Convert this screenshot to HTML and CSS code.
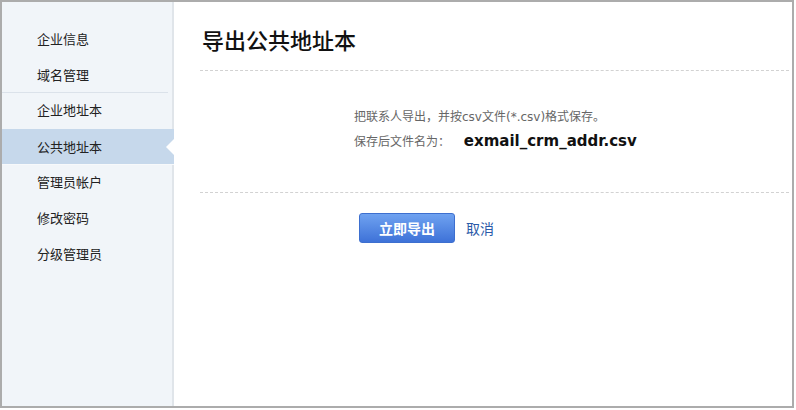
FILE: index.html
```html
<!DOCTYPE html>
<html lang="zh-CN">
<head>
  <meta charset="UTF-8">
  <title>导出公共地址本</title>
  <link rel="stylesheet" href="styles.css">
</head>
<body>
  <div class="frame">
    <ul class="menu">
      <li>企业信息</li>
      <li class="sep">域名管理</li>
      <li>企业地址本</li>
      <li class="current">公共地址本</li>
      <li>管理员帐户</li>
      <li>修改密码</li>
      <li>分级管理员</li>
    </ul>

    <div class="main">
      <h2 class="title">导出公共地址本</h2>
      <div class="info">
        <p>把联系人导出，并按csv文件(*.csv)格式保存。</p>
        <p>保存后文件名为： <b class="fname">exmail_crm_addr.csv</b></p>
      </div>
      <div class="actions">
        <button type="button" class="btn">立即导出</button>
        <a class="cancel">取消</a>
      </div>
    </div>
  </div>
</body>
</html>
```

FILE: styles.css
```css
body {
  margin: 0;
  font-family: "Liberation Sans", "Noto Sans CJK SC", sans-serif;
  background: #fff;
}

.frame {
  width: 794px;
  height: 408px;
  box-sizing: border-box;
  border: 2px solid #acacac;
  display: flex;
}

/* menu lateral */
.menu {
  list-style: none;
  margin: 0;
  padding: 20px 0 0;
  width: 170px;
  background: #f1f5f9;
  border-right: 2px solid #e0e5ea;
}

.menu li {
  position: relative;
  height: 36px;
  line-height: 36px;
  padding-left: 35px;
  font-size: 13px;
  color: #222;
}

.menu li.sep {
  height: 34px;
  border-bottom: 1px solid #dbe2ea;
  margin-right: 4px;
}

.menu li.current {
  height: 35px;
  line-height: 37px;
  background: #c6d8eb;
  margin-right: -2px;
  border-bottom: 1px solid #f7f9fb;
}

.menu li.current::after {
  content: "";
  position: absolute;
  right: 0;
  top: 10px;
  border-right: 8px solid #fff;
  border-top: 8px solid transparent;
  border-bottom: 8px solid transparent;
}

/* contenido */
.main {
  flex: 1;
  padding: 21px 3px 0 26px;
}

.title {
  margin: 0;
  font-family: "Noto Sans CJK SC", sans-serif;
  font-size: 22px;
  font-weight: 500;
  line-height: 32px;
  color: #111;
  padding-bottom: 15px;
  border-bottom: 1px dashed #d2d2d2;
  padding-left: 2px;
}

.info {
  padding: 34px 0 38px 154px;
  border-bottom: 1px dashed #d2d2d2;
}

.info p {
  margin: 0;
  font-family: "DejaVu Sans", "Noto Sans CJK SC", sans-serif;
  font-size: 12px;
  line-height: 24px;
  color: #666;
}

.fname {
  font-size: 15px;
  color: #111;
  margin-left: 10px;
}

.actions {
  padding: 20px 0 0 159px;
  display: flex;
  align-items: center;
  gap: 11px;
}

.btn {
  width: 96px;
  height: 30px;
  border: 1px solid #3d6fcf;
  border-radius: 3px;
  background: linear-gradient(#6fa2f0, #3e72d8);
  color: #fff;
  font-family: "Noto Sans CJK SC", sans-serif;
  font-size: 14px;
  font-weight: bold;
  cursor: pointer;
}

.cancel {
  font-size: 14px;
  color: #2a5aa8;
  cursor: pointer;
}
```
